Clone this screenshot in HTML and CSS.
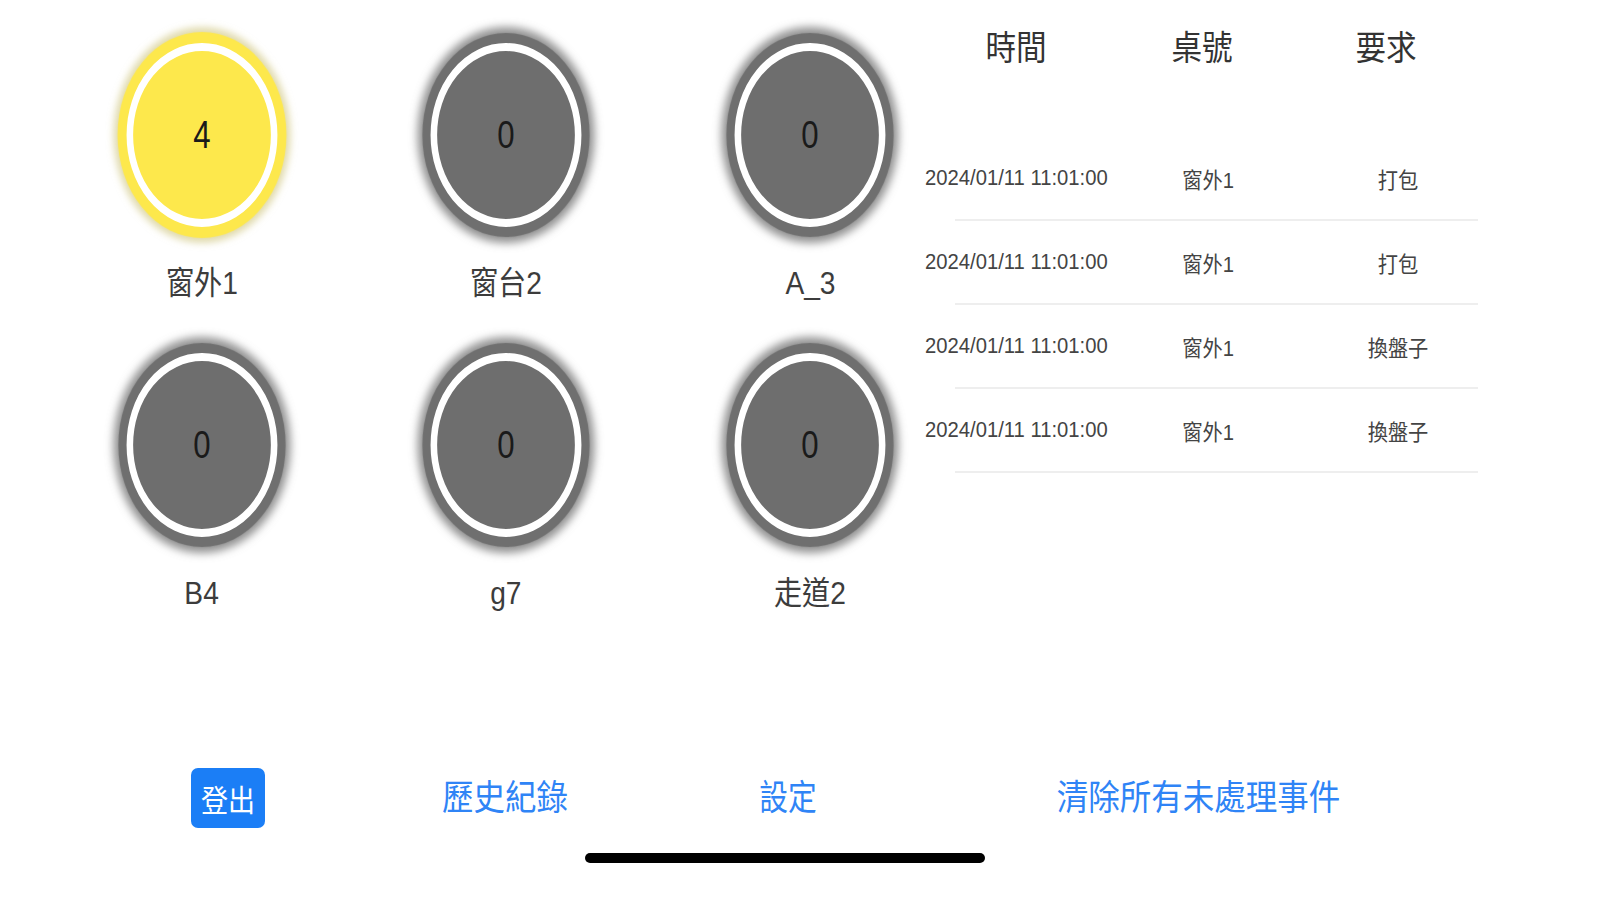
FILE: index.html
```html
<!DOCTYPE html>
<html lang="zh-Hant">
<head>
<meta charset="utf-8">
<title>Tables</title>
<link rel="stylesheet" href="styles.css">
</head>
<body>
<div class="page">
  <div class="main">
    <div class="grid">
      <div class="tile">
        <div class="disc disc-yellow"><span class="count">4</span></div>
        <div class="label"><span class="sq">窗外1</span></div>
      </div>
      <div class="tile">
        <div class="disc"><span class="count">0</span></div>
        <div class="label"><span class="sq">窗台2</span></div>
      </div>
      <div class="tile">
        <div class="disc"><span class="count">0</span></div>
        <div class="label"><span class="sq">A_3</span></div>
      </div>
      <div class="tile">
        <div class="disc"><span class="count">0</span></div>
        <div class="label"><span class="sq">B4</span></div>
      </div>
      <div class="tile">
        <div class="disc"><span class="count">0</span></div>
        <div class="label"><span class="sq">g7</span></div>
      </div>
      <div class="tile">
        <div class="disc"><span class="count">0</span></div>
        <div class="label"><span class="sq">走道2</span></div>
      </div>
    </div>
    <div class="table">
      <div class="thead">
        <div class="th"><span class="sq">時間</span></div>
        <div class="th"><span class="sq">桌號</span></div>
        <div class="th"><span class="sq">要求</span></div>
      </div>
      <div class="trow">
        <div class="td td-time"><span class="sq">2024/01/11 11:01:00</span></div>
        <div class="td"><span class="sq">窗外1</span></div>
        <div class="td"><span class="sq">打包</span></div>
      </div>
      <div class="sep"></div>
      <div class="trow">
        <div class="td td-time"><span class="sq">2024/01/11 11:01:00</span></div>
        <div class="td"><span class="sq">窗外1</span></div>
        <div class="td"><span class="sq">打包</span></div>
      </div>
      <div class="sep"></div>
      <div class="trow">
        <div class="td td-time"><span class="sq">2024/01/11 11:01:00</span></div>
        <div class="td"><span class="sq">窗外1</span></div>
        <div class="td"><span class="sq">換盤子</span></div>
      </div>
      <div class="sep"></div>
      <div class="trow">
        <div class="td td-time"><span class="sq">2024/01/11 11:01:00</span></div>
        <div class="td"><span class="sq">窗外1</span></div>
        <div class="td"><span class="sq">換盤子</span></div>
      </div>
      <div class="sep"></div>
    </div>
  </div>
  <div class="nav">
    <button class="logout"><span class="sq">登出</span></button>
    <a class="link link-history"><span class="sq">歷史紀錄</span></a>
    <a class="link link-settings"><span class="sq">設定</span></a>
    <a class="link link-clear"><span class="sq">清除所有未處理事件</span></a>
  </div>
  <div class="home-indicator"></div>
</div>
</body>
</html>
```
FILE: styles.css
```css
html, body {
  margin: 0;
  padding: 0;
  background: #ffffff;
}
body {
  font-family: "Liberation Sans", "Noto Sans CJK TC", sans-serif;
  color: #333333;
}
.page {
  width: 1599px;
  height: 900px;
  display: flex;
  flex-direction: column;
  overflow: hidden;
}
.main {
  height: 768px;
  display: flex;
}
.sq {
  display: inline-block;
  transform: scaleX(0.9);
  white-space: nowrap;
}

/* grid of tables */
.grid {
  padding: 43px 0 0 87px;
  display: grid;
  grid-template-columns: repeat(3, 230px);
  column-gap: 74px;
  row-gap: 52px;
  align-content: start;
}
.tile {
  display: flex;
  flex-direction: column;
  align-items: center;
}
.disc {
  width: 184px;
  height: 184px;
  box-sizing: border-box;
  border-radius: 50%;
  border: 8px solid #ffffff;
  background: #6e6e6e;
  box-shadow: 0 0 1px 10px #6f6f6f, 0 0 9px 16px rgba(110, 110, 110, 0.75);
  transform: scaleX(0.82);
  display: flex;
  align-items: center;
  justify-content: center;
}
.disc-yellow {
  background: #fde84c;
  box-shadow: 0 0 1px 11px #fde84c, 0 0 8px 16px rgba(200, 190, 110, 0.55);
}
.count {
  font-size: 38px;
  color: #1a1a1a;
  line-height: 1;
}
.label {
  margin-top: 38px;
  height: 36px;
  line-height: 36px;
  font-size: 32px;
  color: #3c3c3c;
}
.label .sq {
  transform: scaleX(0.88);
}

/* request table */
.table {
  width: 566px;
  padding-top: 20px;
  display: flex;
  flex-direction: column;
}
.thead {
  display: grid;
  grid-template-columns: 182px 190px 178px;
  height: 50px;
  align-items: center;
  margin-bottom: 67px;
}
.th {
  text-align: center;
  font-size: 34px;
  color: #333333;
}
.trow {
  display: grid;
  grid-template-columns: 186px 194px 186px;
  height: 82px;
  align-items: center;
}
.td {
  text-align: center;
  font-size: 22px;
  color: #444444;
}
.td .sq {
  transform: scaleX(0.92);
}
.td-time {
  text-align: left;
}
.td-time .sq {
  transform-origin: left center;
}
.sep {
  margin-left: 30px;
  width: 523px;
  height: 2px;
  background: #eeeeee;
}

/* bottom navigation */
.nav {
  height: 60px;
  display: flex;
  align-items: center;
  padding-left: 191px;
}
.logout {
  width: 74px;
  height: 60px;
  border: none;
  border-radius: 7px;
  background: #1b7ef6;
  color: #ffffff;
  font-family: "Liberation Sans", "Noto Sans CJK TC", sans-serif;
  font-size: 30px;
  padding: 0;
  display: flex;
  align-items: center;
  justify-content: center;
}
.link {
  color: #2f84f6;
  font-size: 35px;
  line-height: 60px;
  text-decoration: none;
}
.link-history {
  margin-left: 170px;
}
.link-settings {
  margin-left: 178px;
}
.link-settings .sq {
  transform: scaleX(0.82);
}
.link-clear {
  margin-left: 218px;
}
.home-indicator {
  margin: 25px 0 0 585px;
  width: 400px;
  height: 10px;
  border-radius: 5px;
  background: #000000;
}
```
